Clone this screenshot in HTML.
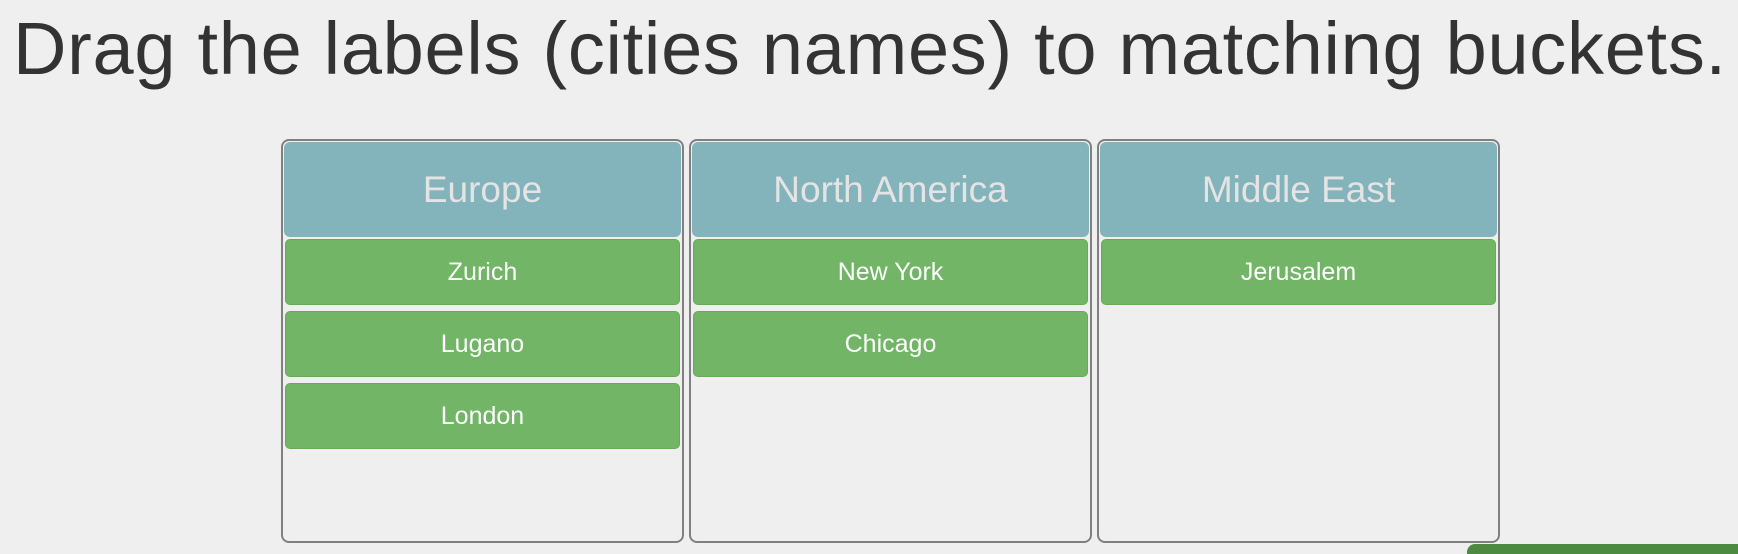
<!DOCTYPE html>
<html><head><meta charset="utf-8"><style>
html,body{margin:0;padding:0;}
body{width:1738px;height:548px;background:#efefef;position:relative;overflow:hidden;font-family:"Liberation Sans",sans-serif;}
h1{position:absolute;left:13px;top:0;margin:0;font-weight:normal;font-size:74px;line-height:98px;color:#333;white-space:nowrap;letter-spacing:0.7px;}
.b{position:absolute;top:139px;width:399px;height:400px;border:2px solid #808080;border-radius:8px;}
.h{position:absolute;left:1px;top:1px;right:1px;height:95px;background:#84b4bb;border-radius:6px;color:#e4e4e4;font-size:37px;text-align:center;line-height:95px;}
.i{position:absolute;left:2px;right:2px;height:64px;background:#72b566;border:1px solid #66a95b;border-radius:5px;color:#fff;font-size:25px;text-align:center;line-height:64px;}
.btn{position:absolute;left:1467px;top:544px;width:280px;height:10px;background:#4d8a41;border-radius:8px 0 0 0;}
</style></head><body>
<h1>Drag the labels (cities names) to matching buckets.</h1>
<div class="b" style="left:281px"><div class="h">Europe</div>
<div class="i" style="top:98px">Zurich</div><div class="i" style="top:170px">Lugano</div><div class="i" style="top:242px">London</div></div>
<div class="b" style="left:689px"><div class="h">North America</div>
<div class="i" style="top:98px">New York</div><div class="i" style="top:170px">Chicago</div></div>
<div class="b" style="left:1097px"><div class="h">Middle East</div>
<div class="i" style="top:98px">Jerusalem</div></div>
<div class="btn"></div>
</body></html>
